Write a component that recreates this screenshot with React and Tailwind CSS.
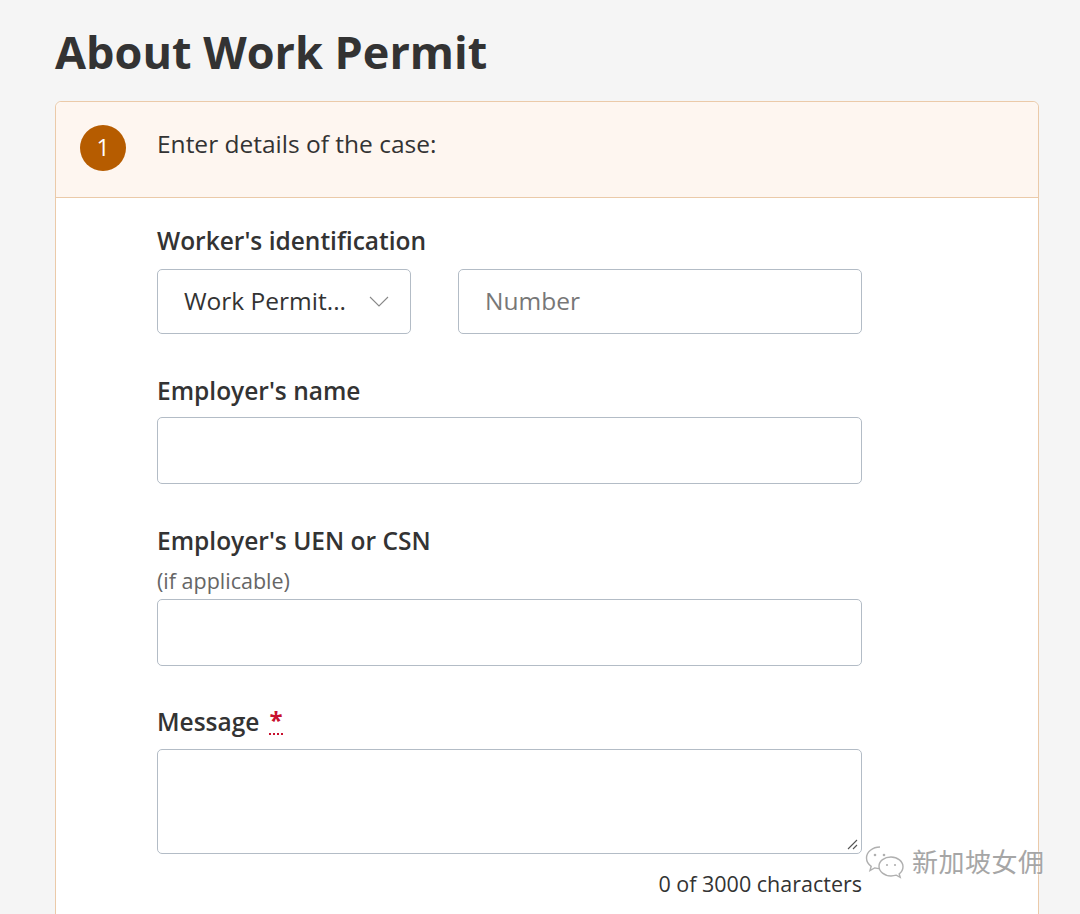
import React from "react";

const font = { fontFamily: '"Open Sans", "Noto Sans CJK SC", sans-serif' };

const Label = ({ children }) => (
  <div className="text-[24.5px] font-semibold text-[#333] leading-[30px]">{children}</div>
);

const box = "rounded-[5px] border-[1.5px] border-[#b3bcc6] bg-white";

export default function App() {
  return (
    <div style={font} className="relative min-h-[914px] w-[1080px] overflow-hidden bg-[#f5f5f5] text-[#333]">
      <h1 className="pl-[55px] pt-[22px] text-[45px] font-bold leading-[60px] text-[#333]">
        About Work Permit
      </h1>

      <div className="ml-[55px] mt-[19px] w-[984px] rounded-t-[6px] border-[1.5px] border-[#ebcaa9] bg-white">
        {/* step header */}
        <div className="flex h-[96px] items-center rounded-t-[6px] border-b-[1.5px] border-[#ebcaa9] bg-[#fef6f0] pb-[4px] pl-[24px]">
          <div className="flex h-[46px] w-[46px] items-center justify-center rounded-full bg-[#b65c00] text-[23px] text-white">
            1
          </div>
          <div className="mb-[6px] ml-[31px] text-[24.5px] text-[#333]">Enter details of the case:</div>
        </div>

        {/* form */}
        <div className="pl-[101px] pt-[28px] pb-[20px]">
          <Label>Worker's identification</Label>
          <div className="mt-[13px] flex gap-[47px]">
            <div className={`flex h-[65px] w-[254px] items-center justify-between pl-[26px] pr-[21px] ${box}`}>
              <span className="text-[24.5px] text-[#333]">Work Permit...</span>
              <svg width="20" height="11" viewBox="0 0 20 11" fill="none" stroke="#888" strokeWidth="1.1">
                <path d="M1 1l9 9 9-9" />
              </svg>
            </div>
            <div className={`flex h-[65px] w-[404px] items-center pl-[26px] ${box}`}>
              <span className="text-[24.5px] text-[#777]">Number</span>
            </div>
          </div>

          <div className="mt-[42px]">
            <Label>Employer's name</Label>
          </div>
          <div className={`mt-[11px] h-[67px] w-[705px] ${box}`} />

          <div className="mt-[42px]">
            <Label>Employer's UEN or CSN</Label>
          </div>
          <div className="mt-[11px] text-[21.5px] leading-[28px] text-[#666]">(if applicable)</div>
          <div className={`mt-[4px] h-[67px] w-[705px] ${box}`} />

          <div className="mt-[41px] flex items-start">
            <Label>Message</Label>
            <span className="ml-[10px] border-b-2 border-dotted border-[#c8102e] text-[24px] font-bold leading-[26px] text-[#c8102e]">
              *
            </span>
          </div>
          <div className={`relative mt-[12px] h-[105px] w-[705px] ${box}`}>
            <svg className="absolute bottom-[3px] right-[3px]" width="12" height="12" viewBox="0 0 12 12" stroke="#555" strokeWidth="1.1">
              <path d="M11 2L2 11M11 7L7 11" />
            </svg>
          </div>
          <div className="mt-[14px] w-[705px] text-right text-[21.5px] text-[#333]">0 of 3000 characters</div>
        </div>
      </div>

      {/* watermark */}
      <div className="absolute left-[864px] top-[844px] flex items-center gap-[6px] text-[#a6a6a6] [text-shadow:0_0_2px_#fff]">
        <svg width="42" height="36" viewBox="0 0 42 36" fill="none" stroke="#b0b0b0" strokeWidth="1.4">
          <path d="M16 3C8.5 3 2.5 8 2.5 14c0 3.4 1.8 6.3 4.7 8.3L6 26.5l4.6-2.6c1.7.5 3.5.8 5.4.8" />
          <circle cx="11" cy="11" r="1.3" fill="#b0b0b0" stroke="none" />
          <circle cx="20" cy="11" r="1.3" fill="#b0b0b0" stroke="none" />
          <path d="M27 13c6.6 0 12 4.4 12 9.8 0 2.8-1.4 5.3-3.8 7.1l1 3.4-3.9-2.1c-1.6.5-3.4.8-5.3.8-6.6 0-12-4.4-12-9.8S20.4 13 27 13z" />
          <circle cx="23" cy="21" r="1.1" fill="#b0b0b0" stroke="none" />
          <circle cx="31" cy="21" r="1.1" fill="#b0b0b0" stroke="none" />
        </svg>
        <span className="text-[26px] leading-none tracking-[0.5px]">新加坡女佣</span>
      </div>
    </div>
  );
}
